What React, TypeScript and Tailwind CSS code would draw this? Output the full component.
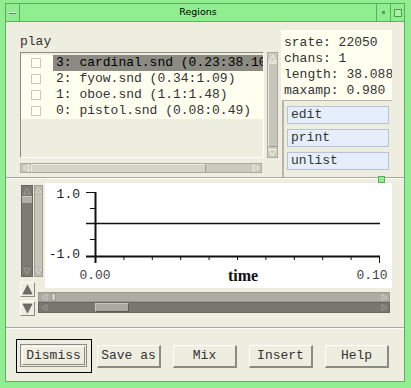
import React from "react";

const mono = "font-['Liberation_Mono',monospace]";

const rows = [
  "3: cardinal.snd (0.23:38.10)",
  "2: fyow.snd (0.34:1.09)",
  "1: oboe.snd (1.1:1.48)",
  "0: pistol.snd (0.08:0.49)",
];

const info = ["srate: 22050", "chans: 1", "length: 38.0884", "maxamp: 0.980"];

function Tri({ dir, className }: { dir: "up" | "down" | "left" | "right"; className?: string }) {
  const pts = {
    up: "5,1.5 9,8.5 1,8.5",
    down: "1,1.5 9,1.5 5,8.5",
    left: "1.5,5 8.5,1 8.5,9",
    right: "1.5,1 8.5,5 1.5,9",
  }[dir];
  return (
    <svg viewBox="0 0 10 10" className={className}>
      <polygon points={pts} fill="none" stroke="currentColor" strokeWidth="1" />
    </svg>
  );
}

function FilledTri({ dir }: { dir: "up" | "down" }) {
  const pts = dir === "up" ? "6,1 11,11 1,11" : "1,1 11,1 6,11";
  return (
    <svg viewBox="0 0 12 12" className="w-[11px] h-[11px]">
      <polygon points={pts} fill="#6f6f68" stroke="#4a4a44" strokeWidth="0.6" />
    </svg>
  );
}

const raised = "border-t border-l border-b-2 border-r-2 border-t-white border-l-white border-b-[#8b8b83] border-r-[#8b8b83]";

function BottomButton({ label }: { label: string }) {
  return (
    <div className={`w-[64px] h-[23px] flex items-center justify-center bg-[#eeeee0] text-[13px] text-[#333] ${raised}`}>
      {label}
    </div>
  );
}

export default function App() {
  return (
    <div className={`w-[411px] h-[388px] bg-[#90ee90] pt-[3px] pl-[5px] pr-[6px] pb-[6px] ${mono}`}>
      <div className="w-full h-full border border-[#5fae5f] flex flex-col">
        {/* title bar */}
        <div className="h-[18px] flex items-center border-b border-[#5fae5f] bg-[#90ee90]">
          <div className="w-[14px] h-[17px] border-r border-[#5fae5f] flex items-center justify-center">
            <div className="w-[7px] h-[2px] bg-[#f4fff4] border-b border-[#4f9a4f]" />
          </div>
          <div className="flex-1 text-center text-[9.5px] text-black font-['DejaVu_Sans',sans-serif]">Regions</div>
          <div className="w-[14px] h-[17px] border-l border-[#5fae5f] flex items-center justify-center">
            <div className="w-[3px] h-[3px] bg-[#5a9c5a]" />
          </div>
          <div className="w-[14px] h-[17px] border-l border-[#5fae5f] flex items-center justify-center">
            <div className="w-[8px] h-[8px] border border-[#4f9a4f] bg-[#a8f4a8]" />
          </div>
        </div>

        {/* content */}
        <div className="flex-1 bg-[#eeeee0] flex flex-col pt-[8px] text-[13px] text-[#333]">
          {/* top section */}
          <div className="h-[147px] flex pl-[14px]">
            <div className="w-[258px] flex flex-col">
              <div className="h-[22px] pt-[4px] leading-[15px]">play</div>
              <div className="h-[106px] flex gap-[3px]">
                <div className="w-[244px] border border-t-[#8b8b83] border-l-[#8b8b83] border-b-white border-r-white pt-[2px] overflow-hidden">
                  {rows.map((r, i) => (
                    <div key={r} className="h-[16px] flex items-center bg-[#fffff0]">
                      <div className="w-[32px] h-full flex items-center pl-[10px]">
                        <div className="w-[10px] h-[10px] border border-[#c9c9be] bg-[#fffff0]" />
                      </div>
                      <div
                        className={`flex-1 h-full pl-[3px] leading-[16px] whitespace-nowrap overflow-hidden ${
                          i === 0 ? "bg-[#8b8b83] text-black" : ""
                        }`}
                      >
                        {r}
                      </div>
                    </div>
                  ))}
                </div>
                <div className="w-[11px] h-[106px] flex flex-col bg-[#cdcdc1] border border-[#a9a99e]">
                  <div className="h-[10px] flex items-center justify-center text-[#f8f8ee]">
                    <Tri dir="up" className="w-[9px] h-[9px]" />
                  </div>
                  <div className="flex-1 bg-[#c6c6ba] border-t border-l border-t-[#e8e8dc] border-l-[#e8e8dc] border-b border-b-[#9a9a90]" />
                  <div className="h-[10px] flex items-center justify-center text-[#f8f8ee]">
                    <Tri dir="down" className="w-[9px] h-[9px]" />
                  </div>
                </div>
              </div>
              <div className="mt-[5px] w-[242px] h-[10px] flex bg-[#c9c9bd] border border-[#a9a99e]">
                <div className="w-[10px] flex items-center justify-center text-[#f8f8ee]">
                  <Tri dir="left" className="w-[8px] h-[8px]" />
                </div>
                <div className="w-[175px] bg-[#d4d4c8] border-t border-l border-t-[#ecece0] border-l-[#ecece0] border-r border-r-[#9a9a90]" />
                <div className="flex-1" />
                <div className="w-[10px] flex items-center justify-center text-[#f8f8ee]">
                  <Tri dir="right" className="w-[8px] h-[8px]" />
                </div>
              </div>
            </div>

            <div className="ml-[3px] w-[111px] flex flex-col">
              <div className="h-[70px] bg-[#fffff0] pl-[3px] pt-[5px] overflow-hidden">
                {info.map((t) => (
                  <div key={t} className="h-[16px] leading-[16px] whitespace-nowrap">
                    {t}
                  </div>
                ))}
              </div>
              <div className="flex-1 ml-[1px] border-l-2 border-t border-l-[#b5b5aa] border-t-[#b5b5aa] pl-[3px] pt-[5px] flex flex-col gap-[5px]">
                {["edit", "print", "unlist"].map((b) => (
                  <div
                    key={b}
                    className="w-[102px] h-[18px] bg-[#e6eefc] border border-[#b8c4d6] pl-[3px] leading-[16px]"
                  >
                    {b}
                  </div>
                ))}
              </div>
            </div>
          </div>

          {/* separator with sash */}
          <div className="relative h-[2px] border-t border-[#a9a99e] border-b border-b-white">
            <div className="absolute right-[19px] -top-[2px] w-[7px] h-[7px] bg-[#90ee90] border border-[#5fae5f]" />
          </div>

          {/* graph section */}
          <div className="mt-[4px] h-[105px] flex pl-[15px]">
            <div className="w-[24px] pt-[2px] flex gap-[1px]">
              <div className="w-[12px] h-[92px] bg-[#7b7b73] flex flex-col border border-[#66665f]">
                <div className="h-[10px] flex items-center justify-center text-[#a8a89e]">
                  <Tri dir="up" className="w-[8px] h-[8px]" />
                </div>
                <div className="h-[7px] bg-[#b0b0a6] border-t border-t-[#d0d0c4]" />
                <div className="flex-1" />
                <div className="h-[10px] flex items-center justify-center text-[#a8a89e]">
                  <Tri dir="down" className="w-[8px] h-[8px]" />
                </div>
              </div>
              <div className="w-[9px] h-[92px] bg-[#b9b9af] flex flex-col border border-[#a0a096]">
                <div className="h-[9px] flex items-center justify-center text-[#e6e6da]">
                  <Tri dir="up" className="w-[7px] h-[7px]" />
                </div>
                <div className="flex-1 bg-[#c4c4b9]" />
                <div className="h-[9px] flex items-center justify-center text-[#e6e6da]">
                  <Tri dir="down" className="w-[7px] h-[7px]" />
                </div>
              </div>
            </div>
            <div className="w-[347px] h-[105px] bg-white">
              <svg width="347" height="105" className="block font-['Liberation_Mono',monospace]">
                <line x1="41" y1="9.5" x2="51" y2="9.5" stroke="#111" strokeWidth="1" />
                <line x1="45" y1="25.5" x2="51" y2="25.5" stroke="#111" strokeWidth="1" />
                <line x1="41" y1="40.5" x2="335" y2="40.5" stroke="#111" strokeWidth="1.3" />
                <line x1="45" y1="56.5" x2="51" y2="56.5" stroke="#111" strokeWidth="1" />
                <line x1="50.5" y1="9" x2="50.5" y2="80" stroke="#111" strokeWidth="2" />
                <line x1="41" y1="73.5" x2="335" y2="73.5" stroke="#111" strokeWidth="2" />
                {Array.from({ length: 11 }).map((_, i) => {
                  const x = 50.5 + i * 28.4;
                  return (
                    <line
                      key={i}
                      x1={x}
                      y1="73"
                      x2={x}
                      y2={i === 0 || i === 10 ? 80 : 77}
                      stroke="#111"
                      strokeWidth="1"
                    />
                  );
                })}
                <text x="35" y="15" textAnchor="end" fontSize="13" fill="#222">1.0</text>
                <text x="35" y="75" textAnchor="end" fontSize="13" fill="#222">-1.0</text>
                <text x="50" y="96" textAnchor="middle" fontSize="13" fill="#444">0.00</text>
                <text x="327" y="96" textAnchor="middle" fontSize="13" fill="#444">0.10</text>
                <text
                  x="198"
                  y="98"
                  textAnchor="middle"
                  fontSize="16"
                  fontWeight="bold"
                  fill="#111"
                  className="font-['Liberation_Serif',serif]"
                >
                  time
                </text>
              </svg>
            </div>
          </div>

          <div className="-mt-[6px] h-[34px] flex pl-[14px]">
            <div className="w-[15px] flex flex-col gap-[4px]">
              <div className="w-[15px] h-[15px] flex items-center justify-center bg-[#eeeee0] border border-t-white border-l-white border-b-[#8b8b83] border-r-[#8b8b83]">
                <FilledTri dir="up" />
              </div>
              <div className="w-[15px] h-[15px] flex items-center justify-center bg-[#eeeee0] border border-t-white border-l-white border-b-[#8b8b83] border-r-[#8b8b83]">
                <FilledTri dir="down" />
              </div>
            </div>
            <div className="ml-[3px] pt-[10px] flex flex-col">
              <div className="w-[352px] h-[10px] flex bg-[#acaca2] border border-[#9a9a90]">
                <div className="w-[10px] flex items-center justify-center text-[#dadace]">
                  <Tri dir="left" className="w-[7px] h-[7px]" />
                </div>
                <div className="ml-[2px] w-[5px] bg-[#cfcfc3] border border-[#9a9a90]" />
                <div className="flex-1" />
                <div className="w-[10px] flex items-center justify-center text-[#dadace]">
                  <Tri dir="right" className="w-[7px] h-[7px]" />
                </div>
              </div>
              <div className="w-[352px] h-[11px] flex bg-[#787870] border border-[#66665f]">
                <div className="w-[10px] flex items-center justify-center text-[#a8a89e]">
                  <Tri dir="left" className="w-[7px] h-[7px]" />
                </div>
                <div className="ml-[46px] w-[34px] bg-[#a9a9a0] border border-t-[#c8c8bc] border-l-[#c8c8bc] border-b-[#5e5e58] border-r-[#5e5e58]" />
                <div className="flex-1" />
                <div className="w-[10px] flex items-center justify-center text-[#a8a89e]">
                  <Tri dir="right" className="w-[7px] h-[7px]" />
                </div>
              </div>
            </div>
          </div>

          {/* separator */}
          <div className="mt-[11px] h-[2px] border-t border-[#a9a99e] border-b border-b-white" />

          {/* buttons */}
          <div className="mt-[10px] h-[34px] flex items-center pl-[10px]">
            <div className="w-[76px] h-[34px] border border-black pl-[3px] pt-[4px]">
              <div className="w-[67px] h-[23px] p-[1px] border border-[#8b8b83]">
                <div className="w-full h-full flex items-center justify-center border-t border-l border-t-white border-l-white border-b border-r border-b-[#8b8b83] border-r-[#8b8b83]">
                  Dismiss
                </div>
              </div>
            </div>
            <div className="ml-[5px]">
              <BottomButton label="Save as" />
            </div>
            <div className="ml-[12px]">
              <BottomButton label="Mix" />
            </div>
            <div className="ml-[12px]">
              <BottomButton label="Insert" />
            </div>
            <div className="ml-[12px]">
              <BottomButton label="Help" />
            </div>
          </div>
        </div>
      </div>
    </div>
  );
}
